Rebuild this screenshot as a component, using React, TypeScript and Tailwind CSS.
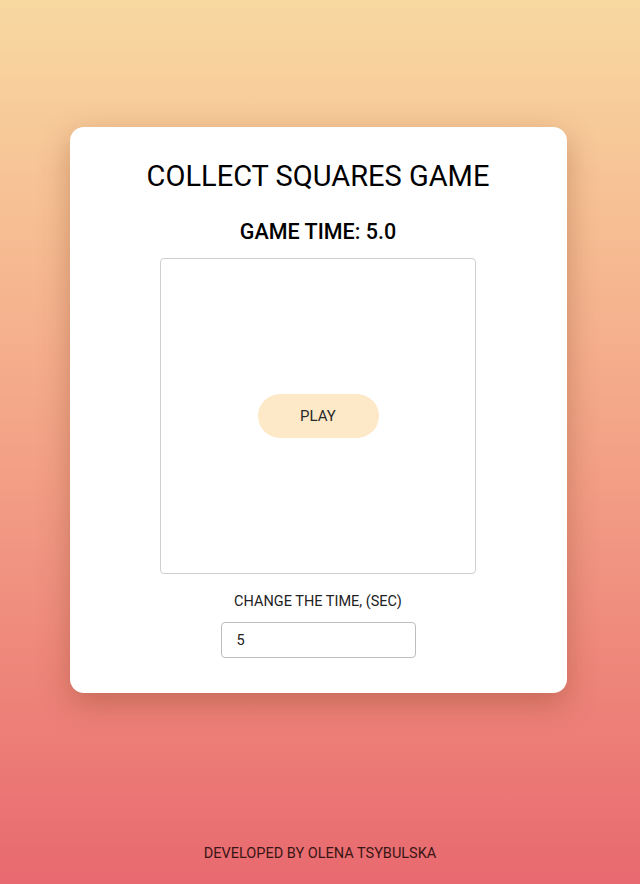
const App = () => {
  return (
    <div
      className="min-h-[884px] flex flex-col items-center bg-gradient-to-b from-[#f8d9a0] to-[#e8696f] text-[#111]"
      style={{ fontFamily: "Roboto, 'Liberation Sans', sans-serif" }}
    >
      <div className="mt-[127px] ml-[-4px] w-[497px] bg-white rounded-[14px] shadow-[0_10px_30px_rgba(120,60,30,0.35)] flex flex-col items-center pt-[32px] pb-[35px]">
        <h1 className="text-[29px] leading-[34px] font-normal text-black">COLLECT SQUARES GAME</h1>
        <h2 className="mt-[26px] text-[21.5px] leading-[26px] font-medium text-black">GAME TIME: 5.0</h2>
        <div className="mt-[13px] w-[316px] h-[316px] border border-[#cfcfcf] rounded-[4px] flex items-center justify-center">
          <button className="w-[121px] h-[44px] rounded-full bg-[#fde9c8] text-[15px] text-[#2a2a2a]">PLAY</button>
        </div>
        <label className="mt-[18px] text-[14.5px] leading-[20px] text-[#222]">CHANGE THE TIME, (SEC)</label>
        <input
          className="mt-[10px] w-[195px] h-[36px] border border-[#bdbdbd] rounded-[4px] pl-[15px] text-[14.5px] text-[#222] outline-none"
          defaultValue="5"
        />
      </div>
      <footer className="mt-auto mb-[20px] text-[14.5px] leading-[20px] text-[#3a1515]">DEVELOPED BY OLENA TSYBULSKA</footer>
    </div>
  );
};

export default App;
